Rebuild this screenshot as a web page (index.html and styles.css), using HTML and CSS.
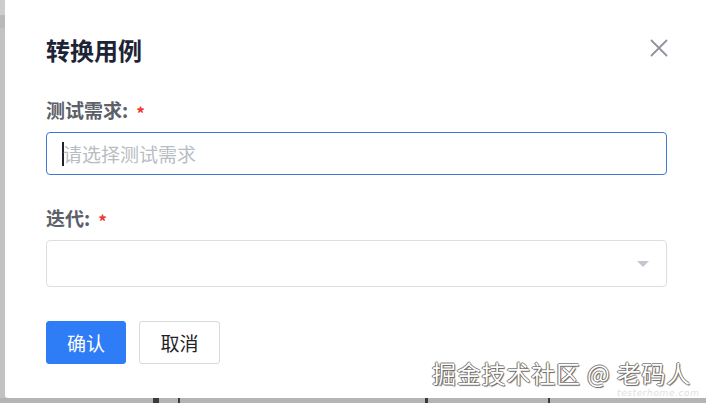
FILE: index.html
```html
<!DOCTYPE html>
<html lang="zh-CN">
<head>
<meta charset="utf-8">
<title>转换用例</title>
<link rel="stylesheet" href="styles.css">
</head>
<body>
<div class="backdrop">
  <span class="tick t1"></span>
  <span class="tick t2"></span>
  <span class="tick t3"></span>
  <span class="tick t4"></span>
</div>
<div class="modal">
  <div class="modal-header">
    <h2 class="modal-title">转换用例</h2>
    <button class="modal-close" aria-label="关闭">
      <svg width="18" height="18" viewBox="0 0 18 18"><path d="M1.5 1.5 L16.5 16.5 M16.5 1.5 L1.5 16.5" stroke="#8f959e" stroke-width="1.8" stroke-linecap="round" fill="none"/></svg>
    </button>
  </div>
  <form class="modal-form">
    <label class="field-label">测试需求:<span class="required">*</span></label>
    <div class="input focused"><span class="caret"></span><span class="placeholder">请选择测试需求</span></div>
    <label class="field-label second">迭代:<span class="required">*</span></label>
    <div class="select"><span class="arrow"></span></div>
    <div class="actions">
      <button type="button" class="btn btn-primary">确认</button>
      <button type="button" class="btn btn-default">取消</button>
    </div>
  </form>
  <div class="watermark">掘金技术社区 @ 老码人</div>
  <div class="watermark-sub">testerhome.com</div>
</div>
</body>
</html>
```
FILE: styles.css
```css
* { box-sizing: border-box; }
html, body {
  margin: 0;
  height: 100%;
  overflow: hidden;
}
body {
  background: linear-gradient(to bottom, #cdcdcd 0, #cdcdcd 15px, #b9b9b9 15px, #b9b9b9 28px, #c2c2c2 28px);
  font-family: "Noto Sans CJK SC", "Noto Sans", sans-serif;
  padding-left: 5px;
  position: relative;
}
.backdrop {
  position: absolute;
  left: 0; right: 0; bottom: 0;
  height: 5px;
  background: #b4b4b4;
}
.tick {
  position: absolute;
  top: 0;
  height: 5px;
  background: #3a3a3a;
}
.t1 { left: 153px; width: 6px; }
.t2 { left: 178px; width: 2px; }
.t3 { left: 425px; width: 3px; }
.t4 { left: 548px; width: 2px; }
.modal {
  position: relative;
  width: 701px;
  height: 398px;
  background: #fff;
  border-bottom-left-radius: 3px;
  padding: 0 39px 0 41px;
}
.modal-header {
  display: flex;
  align-items: center;
  justify-content: space-between;
  padding-top: 32px;
  height: 68px;
}
.modal-title {
  margin: 0;
  font-size: 24px;
  line-height: 36px;
  font-weight: 700;
  color: #1c2436;
}
.modal-close {
  border: 0;
  background: none;
  padding: 0;
  margin-right: -1px;
  margin-top: -4px;
  width: 18px;
  height: 18px;
  display: flex;
}
.modal-form {
  display: flex;
  flex-direction: column;
  padding-top: 29px;
}
.field-label {
  font-size: 19px;
  line-height: 26px;
  font-weight: 700;
  color: #5b6069;
  display: flex;
  align-items: center;
  margin-bottom: 9px;
}
.field-label.second { margin-top: 30px; }
.required {
  color: #f0362d;
  font-size: 17px;
  font-weight: 700;
  margin-left: 8px;
  line-height: 1;
  position: relative;
  top: 2px;
}
.input, .select {
  border-radius: 4px;
  background: #fff;
  display: flex;
  align-items: center;
}
.input {
  height: 43px;
  border: 1px solid #3d7ad6;
  padding-left: 15px;
}
.caret {
  width: 2px;
  height: 24px;
  background: #1f2329;
}
.placeholder {
  font-size: 19px;
  color: #b8bcc3;
  margin-left: -1px;
}
.select {
  height: 47px;
  border: 1px solid #dcdee2;
  justify-content: flex-end;
  padding-right: 17px;
}
.arrow {
  width: 0;
  height: 0;
  border-left: 6px solid transparent;
  border-right: 6px solid transparent;
  border-top: 6px solid #c3c6cc;
}
.actions {
  display: flex;
  gap: 13px;
  margin-top: 34px;
}
.btn {
  height: 43px;
  width: 80px;
  border-radius: 3px;
  font-family: inherit;
  font-size: 19px;
  padding: 0;
}
.btn-primary {
  background: #2e7cf6;
  border: 1px solid #2e7cf6;
  color: #fff;
}
.btn-default {
  background: #fff;
  border: 1px solid #d8d9dc;
  color: #1f2329;
  width: 81px;
}
.watermark {
  position: absolute;
  left: 427px;
  top: 359px;
  font-size: 24px;
  line-height: 28px;
  letter-spacing: 0.8px;
  color: #fff;
  white-space: nowrap;
  text-shadow: 0 0 1px #444, 1px 1px 1px #666, -1px 0 0 #888, 0 -1px 0 #999;
}
.watermark-sub {
  position: absolute;
  left: 612px;
  top: 388px;
  font-family: "DejaVu Sans", sans-serif;
  font-size: 9px;
  line-height: 10px;
  letter-spacing: 0.6px;
  color: #dedede;
  font-style: italic;
  white-space: nowrap;
}
```
